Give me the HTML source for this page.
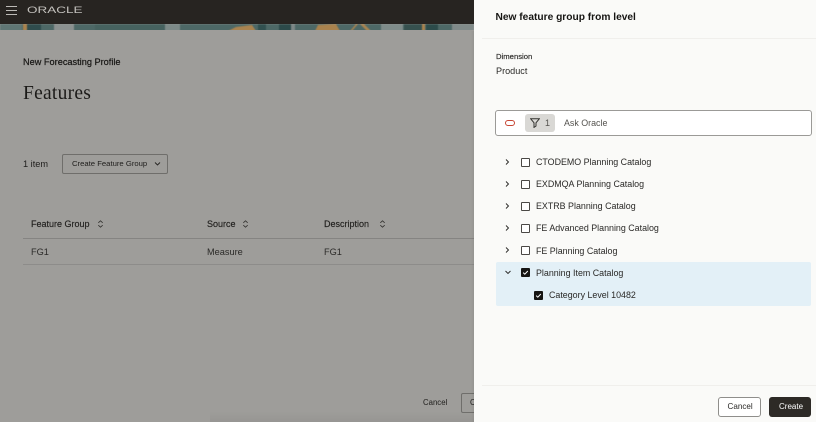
<!DOCTYPE html>
<html lang="en">
<head>
<meta charset="utf-8">
<title>New feature group from level</title>
<style>
html,body{margin:0;padding:0;width:816px;height:422px;overflow:hidden;background:#9e9d9a;font-family:"Liberation Sans",sans-serif;color:#161513}
#wrap{position:absolute;left:0;top:0;width:816px;height:422px;overflow:hidden;filter:blur(.3px)}
.t{position:absolute;white-space:nowrap;line-height:1}
.box{position:absolute;box-sizing:border-box}
#panel{position:absolute;left:474px;top:0;width:342px;height:422px;background:#fafaf8}
.cb{position:absolute;box-sizing:border-box;width:9px;height:9px;border:1px solid #4a4845;border-radius:1px;background:#fff}
.cb.on{background:#161513;border-color:#161513}
</style>
</head>
<body>
<div id="wrap">
<div class="box" style="left:0;top:0;width:474px;height:24px;background:#272421"></div>
<div class="box" style="left:0;top:24px;width:474px;height:6px;overflow:hidden">
<svg style="position:absolute;left:0;top:0;filter:blur(.6px)" width="474" height="7" viewBox="0 0 474 7">
<rect width="474" height="7" fill="#4d6866"/>
<rect x="0" width="22" height="7" fill="#5f7674"/>
<rect x="23" width="4" height="7" fill="#a9824d"/>
<rect x="27" width="14" height="7" fill="#2f4c4d"/>
<rect x="54" width="20" height="7" fill="#8b9190"/>
<rect x="95" width="70" height="7" fill="#46625f"/>
<rect x="165" width="15" height="7" fill="#7d8a88"/>
<path d="M228 7l8-4 16-2 4 6z" fill="#a9834f"/>
<rect x="258" width="8" height="7" fill="#31504f"/>
<rect x="279" width="12" height="7" fill="#2c4a4a"/>
<rect x="291" width="4" height="7" fill="#7d8786"/>
<path d="M315 7l3-6 18-1 4 7z" fill="#a9824d"/>
<path d="M350 7l6-7h2l-6 7zM360 0h4l7 7h-4z" fill="#a9834f"/>
<rect x="381" width="22" height="7" fill="#7f8c8a"/>
<rect x="404" width="18" height="7" fill="#36514f"/>
<rect x="422" width="3" height="7" fill="#a9824d"/>
<rect x="426" width="12" height="7" fill="#2c4b4a"/>
<rect x="452" width="22" height="7" fill="#808a89"/>
</svg>
</div>
<svg class="box" style="left:6px;top:6px" width="11" height="9" viewBox="0 0 11 9"><path d="M0 .5h11M0 4.5h11M0 8.5h11" stroke="#bdbbb7" stroke-width="1"/></svg>
<div class="t" style="left:27px;top:6px;font-size:9.5px;color:#c3c1bd;transform:scaleX(1.42);transform-origin:left">ORACLE</div>

<div class="t" style="left:23px;top:58px;font-size:9.2px;color:#171614;-webkit-text-stroke:.2px #171614">New Forecasting Profile</div>
<div class="t" style="left:23px;top:82.5px;font:19.5px 'Liberation Serif',serif;color:#1c1b19;letter-spacing:.25px">Features</div>
<div class="t" style="left:23px;top:160px;font-size:9.2px;color:#1f1e1c">1 item</div>
<div class="box" style="left:62px;top:154px;width:106px;height:20px;border:1px solid #6f6e6b;border-radius:2px"></div>
<div class="t" style="left:72px;top:160px;font-size:7.7px;color:#1f1e1c">Create Feature Group</div>
<svg class="box" style="left:154px;top:161px" width="7" height="6" viewBox="0 0 7 6"><path d="M1 1.5L3.5 4 6 1.5" fill="none" stroke="#242321" stroke-width=".9"/></svg>

<div class="t" style="left:31px;top:220px;font-size:9px;color:#1f1e1c;-webkit-text-stroke:.15px #1f1e1c">Feature Group</div>
<div class="t" style="left:207px;top:220px;font-size:9px;color:#1f1e1c;-webkit-text-stroke:.15px #1f1e1c">Source</div>
<div class="t" style="left:324px;top:220px;font-size:9px;color:#1f1e1c;-webkit-text-stroke:.15px #1f1e1c">Description</div>
<svg class="box" style="left:97px;top:220px" width="7" height="8" viewBox="0 0 7 8"><path d="M1.3 2.8L3.5 .8 5.7 2.8M1.3 5.2L3.5 7.2 5.7 5.2" fill="none" stroke="#33322f" stroke-width=".8"/></svg>
<svg class="box" style="left:242px;top:220px" width="7" height="8" viewBox="0 0 7 8"><path d="M1.3 2.8L3.5 .8 5.7 2.8M1.3 5.2L3.5 7.2 5.7 5.2" fill="none" stroke="#33322f" stroke-width=".8"/></svg>
<svg class="box" style="left:379px;top:220px" width="7" height="8" viewBox="0 0 7 8"><path d="M1.3 2.8L3.5 .8 5.7 2.8M1.3 5.2L3.5 7.2 5.7 5.2" fill="none" stroke="#33322f" stroke-width=".8"/></svg>
<div class="box" style="left:23px;top:238px;width:451px;height:1px;background:#858482"></div>
<div class="t" style="left:31px;top:247.5px;font-size:9.2px;color:#2b2a28">FG1</div>
<div class="t" style="left:207px;top:247.5px;font-size:9.2px;color:#2b2a28">Measure</div>
<div class="t" style="left:324px;top:247.5px;font-size:9.2px;color:#2b2a28">FG1</div>
<div class="box" style="left:23px;top:264px;width:451px;height:1px;background:#8d8c8a"></div>

<div class="t" style="left:423px;top:398.5px;font-size:7.8px;color:#1f1e1c">Cancel</div>
<div class="box" style="left:461px;top:393px;width:20px;height:20px;border:1px solid #6f6e6b;border-radius:2px"></div>
<div class="t" style="left:470px;top:398.5px;font-size:7.8px;color:#1f1e1c">Cancel</div>
<div class="box" style="left:210px;top:412px;width:264px;height:10px;background:linear-gradient(to bottom,rgba(135,134,131,0),rgba(135,134,131,.3))"></div>

<div id="panel"></div>
<div class="box" style="left:471px;top:31px;width:3px;height:391px;background:linear-gradient(to right,rgba(0,0,0,0),rgba(0,0,0,.05))"></div>

<div class="t" style="left:495.5px;top:12.5px;font-size:10.2px;font-weight:700;color:#161513">New feature group from level</div>
<div class="box" style="left:482px;top:38px;width:334px;height:1px;background:#f0efec"></div>
<div class="t" style="left:496px;top:52.5px;font-size:7.7px;color:#2a2927;-webkit-text-stroke:.15px #2a2927">Dimension</div>
<div class="t" style="left:496px;top:66.5px;font-size:9.1px;color:#2a2927">Product</div>

<div class="box" style="left:495px;top:110px;width:317px;height:26px;background:#fff;border:1px solid #9b9a97;border-radius:3px"></div>
<div class="box" style="left:505px;top:120px;width:10px;height:6px;border:1px solid #c74634;border-radius:3px"></div>
<div class="box" style="left:525px;top:114px;width:30px;height:18px;background:#d9d8d5;border-radius:3px"></div>
<svg class="box" style="left:530px;top:118px" width="10" height="10" viewBox="0 0 10 10"><path d="M.7.8h8.6L6 4.8V8L4 9.4V4.8z" fill="none" stroke="#33322f" stroke-width="1"/></svg>
<div class="t" style="left:545px;top:119px;font-size:9px;color:#55534f">1</div>
<div class="t" style="left:564px;top:119px;font-size:8.9px;color:#55534f">Ask Oracle</div>

<div class="box" style="left:496px;top:262px;width:315px;height:44px;background:#e3f0f7;border-radius:2px"></div>

<svg class="box" style="left:504px;top:158px" width="7" height="8" viewBox="0 0 7 8"><path d="M2 1.5L4.5 4 2 6.5" fill="none" stroke="#272624" stroke-width=".9"/></svg>
<svg class="box" style="left:504px;top:180px" width="7" height="8" viewBox="0 0 7 8"><path d="M2 1.5L4.5 4 2 6.5" fill="none" stroke="#272624" stroke-width=".9"/></svg>
<svg class="box" style="left:504px;top:202px" width="7" height="8" viewBox="0 0 7 8"><path d="M2 1.5L4.5 4 2 6.5" fill="none" stroke="#272624" stroke-width=".9"/></svg>
<svg class="box" style="left:504px;top:224px" width="7" height="8" viewBox="0 0 7 8"><path d="M2 1.5L4.5 4 2 6.5" fill="none" stroke="#272624" stroke-width=".9"/></svg>
<svg class="box" style="left:504px;top:246px" width="7" height="8" viewBox="0 0 7 8"><path d="M2 1.5L4.5 4 2 6.5" fill="none" stroke="#272624" stroke-width=".9"/></svg>
<svg class="box" style="left:504px;top:269px" width="8" height="7" viewBox="0 0 8 7"><path d="M1.5 2L4 4.5 6.5 2" fill="none" stroke="#272624" stroke-width=".9"/></svg>

<div class="cb" style="left:521px;top:158px"></div>
<div class="cb" style="left:521px;top:180px"></div>
<div class="cb" style="left:521px;top:202px"></div>
<div class="cb" style="left:521px;top:224px"></div>
<div class="cb" style="left:521px;top:246px"></div>
<div class="cb on" style="left:521px;top:268px"></div>
<div class="cb on" style="left:534px;top:291px"></div>
<svg class="box" style="left:521px;top:268px" width="9" height="9" viewBox="0 0 9 9"><path d="M2.2 4.6L3.8 6.2 6.8 3" fill="none" stroke="#fff" stroke-width="1"/></svg>
<svg class="box" style="left:534px;top:291px" width="9" height="9" viewBox="0 0 9 9"><path d="M2.2 4.6L3.8 6.2 6.8 3" fill="none" stroke="#fff" stroke-width="1"/></svg>

<div class="t" style="left:536px;top:158px;font-size:8.9px;color:#2a2927">CTODEMO Planning Catalog</div>
<div class="t" style="left:536px;top:180px;font-size:8.9px;color:#2a2927">EXDMQA Planning Catalog</div>
<div class="t" style="left:536px;top:202px;font-size:8.9px;color:#2a2927">EXTRB Planning Catalog</div>
<div class="t" style="left:536px;top:224px;font-size:8.9px;color:#2a2927">FE Advanced Planning Catalog</div>
<div class="t" style="left:536px;top:246.5px;font-size:8.9px;color:#2a2927">FE Planning Catalog</div>
<div class="t" style="left:536px;top:268.5px;font-size:8.9px;color:#2a2927">Planning Item Catalog</div>
<div class="t" style="left:549px;top:291px;font-size:8.9px;color:#2a2927">Category Level 10482</div>

<div class="box" style="left:482px;top:385px;width:334px;height:1px;background:#f0efec"></div>
<div class="box" style="left:718px;top:397px;width:43px;height:20px;background:#fff;border:1px solid #8f8e8b;border-radius:3px"></div>
<div class="t" style="left:727.5px;top:403px;font-size:8.1px;color:#2a2927">Cancel</div>
<div class="box" style="left:769px;top:397px;width:42px;height:20px;background:#2d2a26;border-radius:3px"></div>
<div class="t" style="left:779px;top:403px;font-size:8px;color:#fff">Create</div>
</div>
</body>
</html>
